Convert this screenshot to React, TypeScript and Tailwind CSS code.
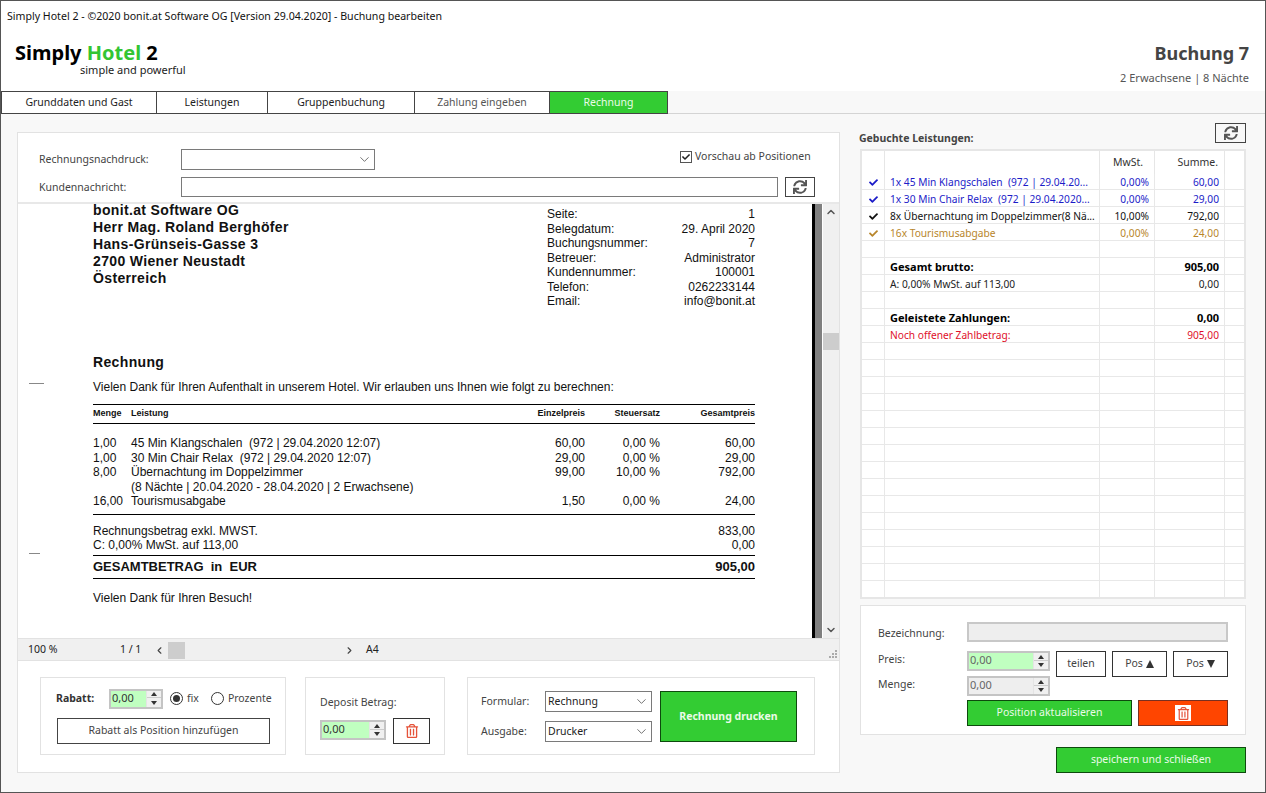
import React from "react";
import { ChevronDown, ChevronLeft, ChevronRight, ChevronUp } from "lucide-react";
import { FaSync, FaCheck, FaRegTrashAlt } from "react-icons/fa";

const tabs: [string, string, string][] = [
  ["Grunddaten und Gast", "w-[155px]", "text-[#222]"],
  ["Leistungen", "w-[111px]", "text-[#222]"],
  ["Gruppenbuchung", "w-[147px]", "text-[#222]"],
  ["Zahlung eingeben", "w-[135px]", "text-[#555]"],
];

function Spinner({ w, bg, color = "text-[#333]" }: { w: string; bg: string; color?: string }) {
  return (
    <div className={`${w} h-[20px] border-2 border-[#c4c4c4] flex ${bg}`}>
      <div className={`flex-1 text-[11px] leading-[14px] pl-[1px] ${color}`}>0,00</div>
      <div className="w-[15px] bg-[#f0f0f0] flex flex-col items-center justify-center gap-[1px] border-l border-[#e4e4e4]">
        <div className="w-full h-[7px] flex items-center justify-center border-b border-[#ccc]">
          <div className="w-0 h-0 border-x-[3px] border-x-transparent border-b-[4px] border-b-[#333]" />
        </div>
        <div className="w-full h-[7px] flex items-center justify-center">
          <div className="w-0 h-0 border-x-[3px] border-x-transparent border-t-[4px] border-t-[#333]" />
        </div>
      </div>
    </div>
  );
}

function Select({ w, text = "" }: { w: string; text?: string }) {
  return (
    <div className={`${w} h-[21px] border border-[#7a7a7a] bg-white flex items-center justify-between pl-[2px] pr-[2px]`}>
      <span className="text-[10.5px] text-[#222]">{text}</span>
      <ChevronDown size={15} strokeWidth={1.2} className="text-[#444]" />
    </div>
  );
}

function Radio({ on }: { on?: boolean }) {
  return (
    <div className="w-[13px] h-[13px] rounded-full border border-[#333] bg-white flex items-center justify-center">
      {on && <div className="w-[7px] h-[7px] rounded-full bg-[#333]" />}
    </div>
  );
}

const rows: { n?: string; m?: string; s?: string; c?: string; b?: boolean; check?: boolean }[] = [
  { n: "1x 45 Min Klangschalen  (972 | 29.04.20...", m: "0,00%", s: "60,00", c: "text-[#1c1cc8]", check: true },
  { n: "1x 30 Min Chair Relax  (972 | 29.04.2020...", m: "0,00%", s: "29,00", c: "text-[#1c1cc8]", check: true },
  { n: "8x Übernachtung im Doppelzimmer(8 Nä...", m: "10,00%", s: "792,00", c: "text-[#111]", check: true },
  { n: "16x Tourismusabgabe", m: "0,00%", s: "24,00", c: "text-[#b8862b]", check: true },
  {},
  { n: "Gesamt brutto:", s: "905,00", c: "text-black", b: true },
  { n: "A: 0,00% MwSt. auf 113,00", s: "0,00", c: "text-[#222]" },
  {},
  { n: "Geleistete Zahlungen:", s: "0,00", c: "text-black", b: true },
  { n: "Noch offener Zahlbetrag:", s: "905,00", c: "text-[#e0102a]" },
  ...Array.from({ length: 15 }, () => ({})),
];

const positions = [
  ["1,00", "45 Min Klangschalen  (972 | 29.04.2020 12:07)", "60,00", "0,00 %", "60,00"],
  ["1,00", "30 Min Chair Relax  (972 | 29.04.2020 12:07)", "29,00", "0,00 %", "29,00"],
  ["8,00", "Übernachtung im Doppelzimmer", "99,00", "10,00 %", "792,00"],
  ["", "(8 Nächte | 20.04.2020 - 28.04.2020 | 2 Erwachsene)", "", "", ""],
  ["16,00", "Tourismusabgabe", "1,50", "0,00 %", "24,00"],
];

const meta = [
  ["Seite:", "1"],
  ["Belegdatum:", "29. April 2020"],
  ["Buchungsnummer:", "7"],
  ["Betreuer:", "Administrator"],
  ["Kundennummer:", "100001"],
  ["Telefon:", "0262233144"],
  ["Email:", "info@bonit.at"],
];

function Report() {
  return (
    <div className="relative flex-1 h-full overflow-hidden pl-[75px] [font-family:Liberation_Sans,Arial,sans-serif] text-[#111]">
      <div className="absolute left-[11px] top-[179px] w-[15px] h-px bg-[#888]" />
      <div className="absolute left-[11px] top-[349px] w-[11px] h-px bg-[#888]" />
      <div className="w-[662px]">
        <div className="h-[149px] flex justify-between">
          <div className="text-[14px] leading-[17px] font-bold tracking-[0.35px]">
            <div className="h-[15px] leading-[13px]">bonit.at Software OG</div>
            <div>Herr Mag. Roland Berghöfer</div>
            <div>Hans-Grünseis-Gasse 3</div>
            <div>2700 Wiener Neustadt</div>
            <div>Österreich</div>
          </div>
          <div className="w-[208px] pt-[3px] text-[12px] leading-[14.5px]">
            {meta.map(([a, b]) => (
              <div key={a} className="flex justify-between">
                <span>{a}</span>
                <span>{b}</span>
              </div>
            ))}
          </div>
        </div>
        <div className="h-[18px] text-[14px] leading-[18px] font-bold tracking-[0.35px]">Rechnung</div>
        <div className="mt-[8px] h-[16px] text-[12px] leading-[16px]">
          Vielen Dank für Ihren Aufenthalt in unserem Hotel. Wir erlauben uns Ihnen wie folgt zu berechnen:
        </div>
        <div className="mt-[9px] h-[20px] border-y border-black flex items-center text-[9px] font-bold">
          <span className="w-[38px]">Menge</span>
          <span className="w-[316px]">Leistung</span>
          <span className="w-[138px] text-right">Einzelpreis</span>
          <span className="w-[75px] text-right">Steuersatz</span>
          <span className="w-[95px] text-right">Gesamtpreis</span>
        </div>
        <div className="mt-[12px] text-[12px] leading-[14.5px]">
          {positions.map((p, i) => (
            <div key={i} className="flex h-[14.5px]">
              <span className="w-[38px]">{p[0]}</span>
              <span className="w-[316px] whitespace-pre">{p[1]}</span>
              <span className="w-[138px] text-right">{p[2]}</span>
              <span className="w-[75px] text-right">{p[3]}</span>
              <span className="w-[95px] text-right">{p[4]}</span>
            </div>
          ))}
        </div>
        <div className="mt-[5px] h-px bg-black" />
        <div className="mt-[9px] text-[12px] leading-[14px]">
          <div className="flex justify-between">
            <span>Rechnungsbetrag exkl. MWST.</span>
            <span>833,00</span>
          </div>
          <div className="flex justify-between">
            <span>C: 0,00% MwSt. auf 113,00</span>
            <span>0,00</span>
          </div>
        </div>
        <div className="mt-[3px] h-[24px] border-y border-black flex items-center justify-between text-[13px] font-bold">
          <span className="whitespace-pre">GESAMTBETRAG  in  EUR</span>
          <span>905,00</span>
        </div>
        <div className="mt-[11px] text-[12px] leading-[16px]">Vielen Dank für Ihren Besuch!</div>
      </div>
    </div>
  );
}

function PosButton({ up }: { up?: boolean }) {
  return (
    <button className="ml-[6px] w-[55px] h-[26px] border border-[#333] bg-white text-[10.5px] text-[#444] flex items-center justify-center gap-[3px]">
      Pos
      {up ? (
        <span className="w-0 h-0 border-x-[4.5px] border-x-transparent border-b-[8px] border-b-[#333]" />
      ) : (
        <span className="w-0 h-0 border-x-[4.5px] border-x-transparent border-t-[8px] border-t-[#333]" />
      )}
    </button>
  );
}

export default function App() {
  return (
    <div className="w-[1266px] h-[793px] overflow-hidden bg-[#f8f8f8] border border-[#555] flex flex-col [font-family:Noto_Sans,sans-serif] text-[#333]">
      {/* Title and header */}
      <div className="h-[90px] bg-white relative shrink-0">
        <div className="pl-[6px] pt-[6px] text-[10.6px] leading-[18px] text-[#111]">
          Simply Hotel 2 - ©2020 bonit.at Software OG [Version 29.04.2020] - Buchung bearbeiten
        </div>
        <div className="flex justify-between">
          <div className="pl-[14px] pt-[15px]">
            <div className="text-[20px] leading-[26px] font-bold text-black whitespace-pre">
              Simply <span className="text-[#33c533]">Hotel</span> 2
            </div>
            <div className="pl-[65px] -mt-[3px] text-[11px] leading-[14px] text-[#222]">simple and powerful</div>
          </div>
          <div className="pr-[16px] pt-[16px] text-right">
            <div className="text-[18px] leading-[24px] font-bold text-[#444]">Buchung 7</div>
            <div className="mt-[4px] text-[11px] leading-[18px] text-[#555]">2 Erwachsene | 8 Nächte</div>
          </div>
        </div>
      </div>
      {/* Tabs */}
      <div className="h-[23px] shrink-0 border-b border-[#d4d4d4] flex">
        <div className="flex h-[23px]">
          {tabs.map(([t, w, c]) => (
            <div key={t} className={`${w} h-full bg-white border border-r-0 border-[#444] flex items-center justify-center text-[10.5px] ${c}`}>
              {t}
            </div>
          ))}
          <div className="w-[119px] h-full bg-[#33cc33] border border-[#444] flex items-center justify-center text-[10.5px] text-[#eafbe8]">
            Rechnung
          </div>
        </div>
      </div>
      {/* Body */}
      <div className="flex-1 flex pl-[16px] pt-[18px]">
        <div className="w-[823px] h-[641px] bg-white border border-[#e2e2e2] flex flex-col">
          <div className="h-[71px] border-b-2 border-[#e8e8e8] shrink-0 pl-[21px] pr-[24px] pt-[16px] relative text-[10.5px] text-[#444]">
            <div className="flex items-center h-[21px]">
              <span className="w-[142px]">Rechnungsnachdruck:</span>
              <Select w="w-[194px]" />
              <div className="ml-[305px] -mt-[6px] flex items-center gap-[3px]">
                <div className="w-[12px] h-[12px] border border-[#555] bg-white flex items-center justify-center">
                  <FaCheck size={8} className="text-[#222]" />
                </div>
                <span className="text-[10.5px] whitespace-nowrap">Vorschau ab Positionen</span>
              </div>
            </div>
            <div className="flex items-center h-[20px] mt-[7px]">
              <span className="w-[142px] pt-[2px]">Kundennachricht:</span>
              <div className="w-[597px] h-[20px] border border-[#7a7a7a]" />
              <div className="ml-[7px] w-[30px] h-[20px] border border-[#444] flex items-center justify-center">
                <FaSync size={14} className="text-[#555]" />
              </div>
            </div>
          </div>
          <div className="h-[434px] shrink-0 flex">
            <Report />
            <div className="w-[3px] h-full bg-black" />
            <div className="w-[7px] h-full bg-[#808080]" />
            <div className="w-px h-full bg-white" />
            <div className="w-[16px] h-full bg-[#f0f0f0] flex flex-col items-center">
              <div className="h-[16px] flex items-center justify-center">
                <ChevronUp size={12} strokeWidth={3} className="text-[#555]" />
              </div>
              <div className="w-full h-[17px] bg-[#cdcdcd] mt-[113px]" />
              <div className="flex-1" />
              <div className="h-[16px] flex items-center justify-center">
                <ChevronDown size={12} strokeWidth={3} className="text-[#555]" />
              </div>
            </div>
          </div>
          <div className="h-[23px] shrink-0 bg-[#f0f0f0] border-y border-[#e2e2e2] pt-[1px] flex items-center text-[10.5px] text-[#222] relative">
            <span className="ml-[10px] w-[92px]">100 %</span>
            <span className="w-[32px]">1 / 1</span>
            <div className="w-[206px] h-[17px] flex items-center">
              <ChevronLeft size={11} strokeWidth={2.5} className="ml-[2px] text-[#444]" />
              <div className="w-[17px] h-[17px] bg-[#cdcdcd] ml-[3px]" />
              <div className="flex-1" />
              <ChevronRight size={11} strokeWidth={2.5} className="mr-[3px] text-[#444]" />
            </div>
            <span className="ml-[8px]">A4</span>
            <div className="absolute right-[2px] bottom-[2px] grid grid-cols-3 gap-px w-[8px]">
              {[0, 0, 1, 0, 1, 1, 1, 1, 1].map((on, i) => (
                <div key={i} className={`w-[2px] h-[2px] ${on ? "bg-[#aaa]" : ""}`} />
              ))}
            </div>
          </div>
          <div className="flex-1 pl-[22px] pt-[16px] flex text-[10.5px] text-[#444]">
            <div className="w-[246px] h-[78px] border border-[#e2e2e2] pl-[15px] pt-[11px]">
              <div className="flex items-center h-[19px]">
                <span className="w-[53px] font-bold text-[#333]">Rabatt:</span>
                <Spinner w="w-[54px]" bg="bg-[#c0ffc0]" />
                <div className="ml-[7px]"><Radio on /></div>
                <span className="ml-[4px] text-[10.5px]">fix</span>
                <div className="ml-[12px]"><Radio /></div>
                <span className="ml-[4px] text-[10.5px]">Prozente</span>
              </div>
              <button className="mt-[10px] ml-px w-[213px] h-[26px] border border-[#444] bg-white text-[10.5px] text-[#444]">
                Rabatt als Position hinzufügen
              </button>
            </div>
            <div className="ml-[19px] w-[140px] h-[78px] border border-[#e2e2e2] pl-[14px]">
              <div className="h-[42px] pt-[15px] leading-[18px] text-[10.5px]">Deposit Betrag:</div>
              <div className="flex items-start">
                <Spinner w="w-[66px]" bg="bg-[#c0ffc0]" />
                <button className="ml-[7px] -mt-[2px] w-[37px] h-[26px] border border-[#333] bg-white flex items-center justify-center">
                  <FaRegTrashAlt size={14} className="text-[#e5533a]" />
                </button>
              </div>
            </div>
            <div className="ml-[22px] w-[348px] h-[78px] border border-[#e2e2e2] pl-[13px] pt-[13px] flex">
              <div className="w-[64px]">
                <div className="h-[21px] leading-[21px] text-[10.5px]">Formular:</div>
                <div className="mt-[9px] h-[21px] leading-[21px] text-[10.5px]">Ausgabe:</div>
              </div>
              <div className="w-[107px]">
                <Select w="w-[107px]" text="Rechnung" />
                <div className="mt-[9px]">
                  <Select w="w-[107px]" text="Drucker" />
                </div>
              </div>
              <button className="ml-[8px] w-[137px] h-[51px] bg-[#33cc33] border border-[#0d4a0d] text-[10.5px] font-bold text-[#eafbe8]">
                Rechnung drucken
              </button>
            </div>
          </div>
        </div>
        {/* Right column */}
        <div className="ml-[20px] w-[386px] -mt-[9px]">
          <div className="h-[26px] flex justify-between -ml-px">
            <span className="text-[10.5px] font-bold text-[#444] leading-[16px] mt-[7px]">Gebuchte Leistungen:</span>
            <div className="w-[31px] h-[20px] border border-[#444] flex items-center justify-center">
              <FaSync size={14} className="text-[#555]" />
            </div>
          </div>
          <div className="h-[450px] bg-white border-2 border-[#e6e6e6] overflow-hidden">
            <div className="h-[23px] grid grid-cols-[23px_215px_55px_70px_19px] text-[10.5px] text-[#333]">
              <div className="border-r border-[#e6e6e6]" />
              <div className="border-r border-[#e6e6e6]" />
              <div className="border-r border-[#e6e6e6] flex items-center justify-center pl-[2px]">MwSt.</div>
              <div className="border-r border-[#e6e6e6] flex items-center justify-end pr-[6px]">Summe.</div>
              <div />
            </div>
            {rows.map((r, i) => (
              <div
                key={i}
                className={`${i === 0 ? "h-[16px] leading-[17px]" : "h-[17px] leading-[18px]"} grid grid-cols-[23px_215px_55px_70px_19px] border-b border-[#e8e8e8] text-[10.2px] ${r.c ?? ""} ${r.b ? "font-bold text-[11px]" : ""}`}
              >
                <div className="border-r border-[#e8e8e8] flex items-center justify-center">
                  {r.check && <FaCheck size={9} />}
                </div>
                <div className="border-r border-[#e8e8e8] pl-[5px] whitespace-pre overflow-hidden">{r.n}</div>
                <div className="border-r border-[#e8e8e8] text-right pr-[5px]">{r.m}</div>
                <div className="border-r border-[#e8e8e8] text-right pr-[5px]">{r.s}</div>
                <div />
              </div>
            ))}
          </div>
          <div className="mt-[6px] h-[130px] bg-white border border-[#e2e2e2] pl-[17px] text-[10.5px] text-[#444]">
            <div className="flex items-center mt-[16px] h-[20px]">
              <span className="w-[89px] pt-[3px]">Bezeichnung:</span>
              <div className="w-[261px] h-[20px] bg-[#eeeeee] border-2 border-[#c8c8c8]" />
            </div>
            <div className="flex mt-[9px]">
              <div className="w-[89px] leading-[16px]">
                <div>Preis:</div>
                <div className="mt-[9px]">Menge:</div>
              </div>
              <div>
                <Spinner w="w-[83px]" bg="bg-[#c0ffc0]" color="text-[#666]" />
                <div className="mt-[5px]">
                  <Spinner w="w-[83px]" bg="bg-[#eeeeee]" color="text-[#666]" />
                </div>
              </div>
              <button className="ml-[6px] w-[50px] h-[26px] border border-[#333] bg-white text-[10.5px] text-[#444]">teilen</button>
              <PosButton up />
              <PosButton />
            </div>
            <div className="flex ml-[89px] mt-[4px]">
              <button className="w-[165px] h-[26px] bg-[#33cc33] border border-[#0d4a0d] text-[10.5px] text-[#eafbe8]">
                Position aktualisieren
              </button>
              <button className="ml-[6px] w-[90px] h-[26px] bg-[#ff4500] border border-[#7a3020] flex items-center justify-center">
                <span className="w-[16px] h-[16px] bg-white flex items-center justify-center">
                  <FaRegTrashAlt size={13} className="text-[#e5533a]" />
                </span>
              </button>
            </div>
          </div>
          <div className="mt-[12px] flex justify-end">
            <button className="w-[190px] h-[26px] bg-[#33cc33] border border-[#0d4a0d] text-[10.5px] text-[#eafbe8]">
              speichern und schließen
            </button>
          </div>
        </div>
      </div>
    </div>
  );
}
